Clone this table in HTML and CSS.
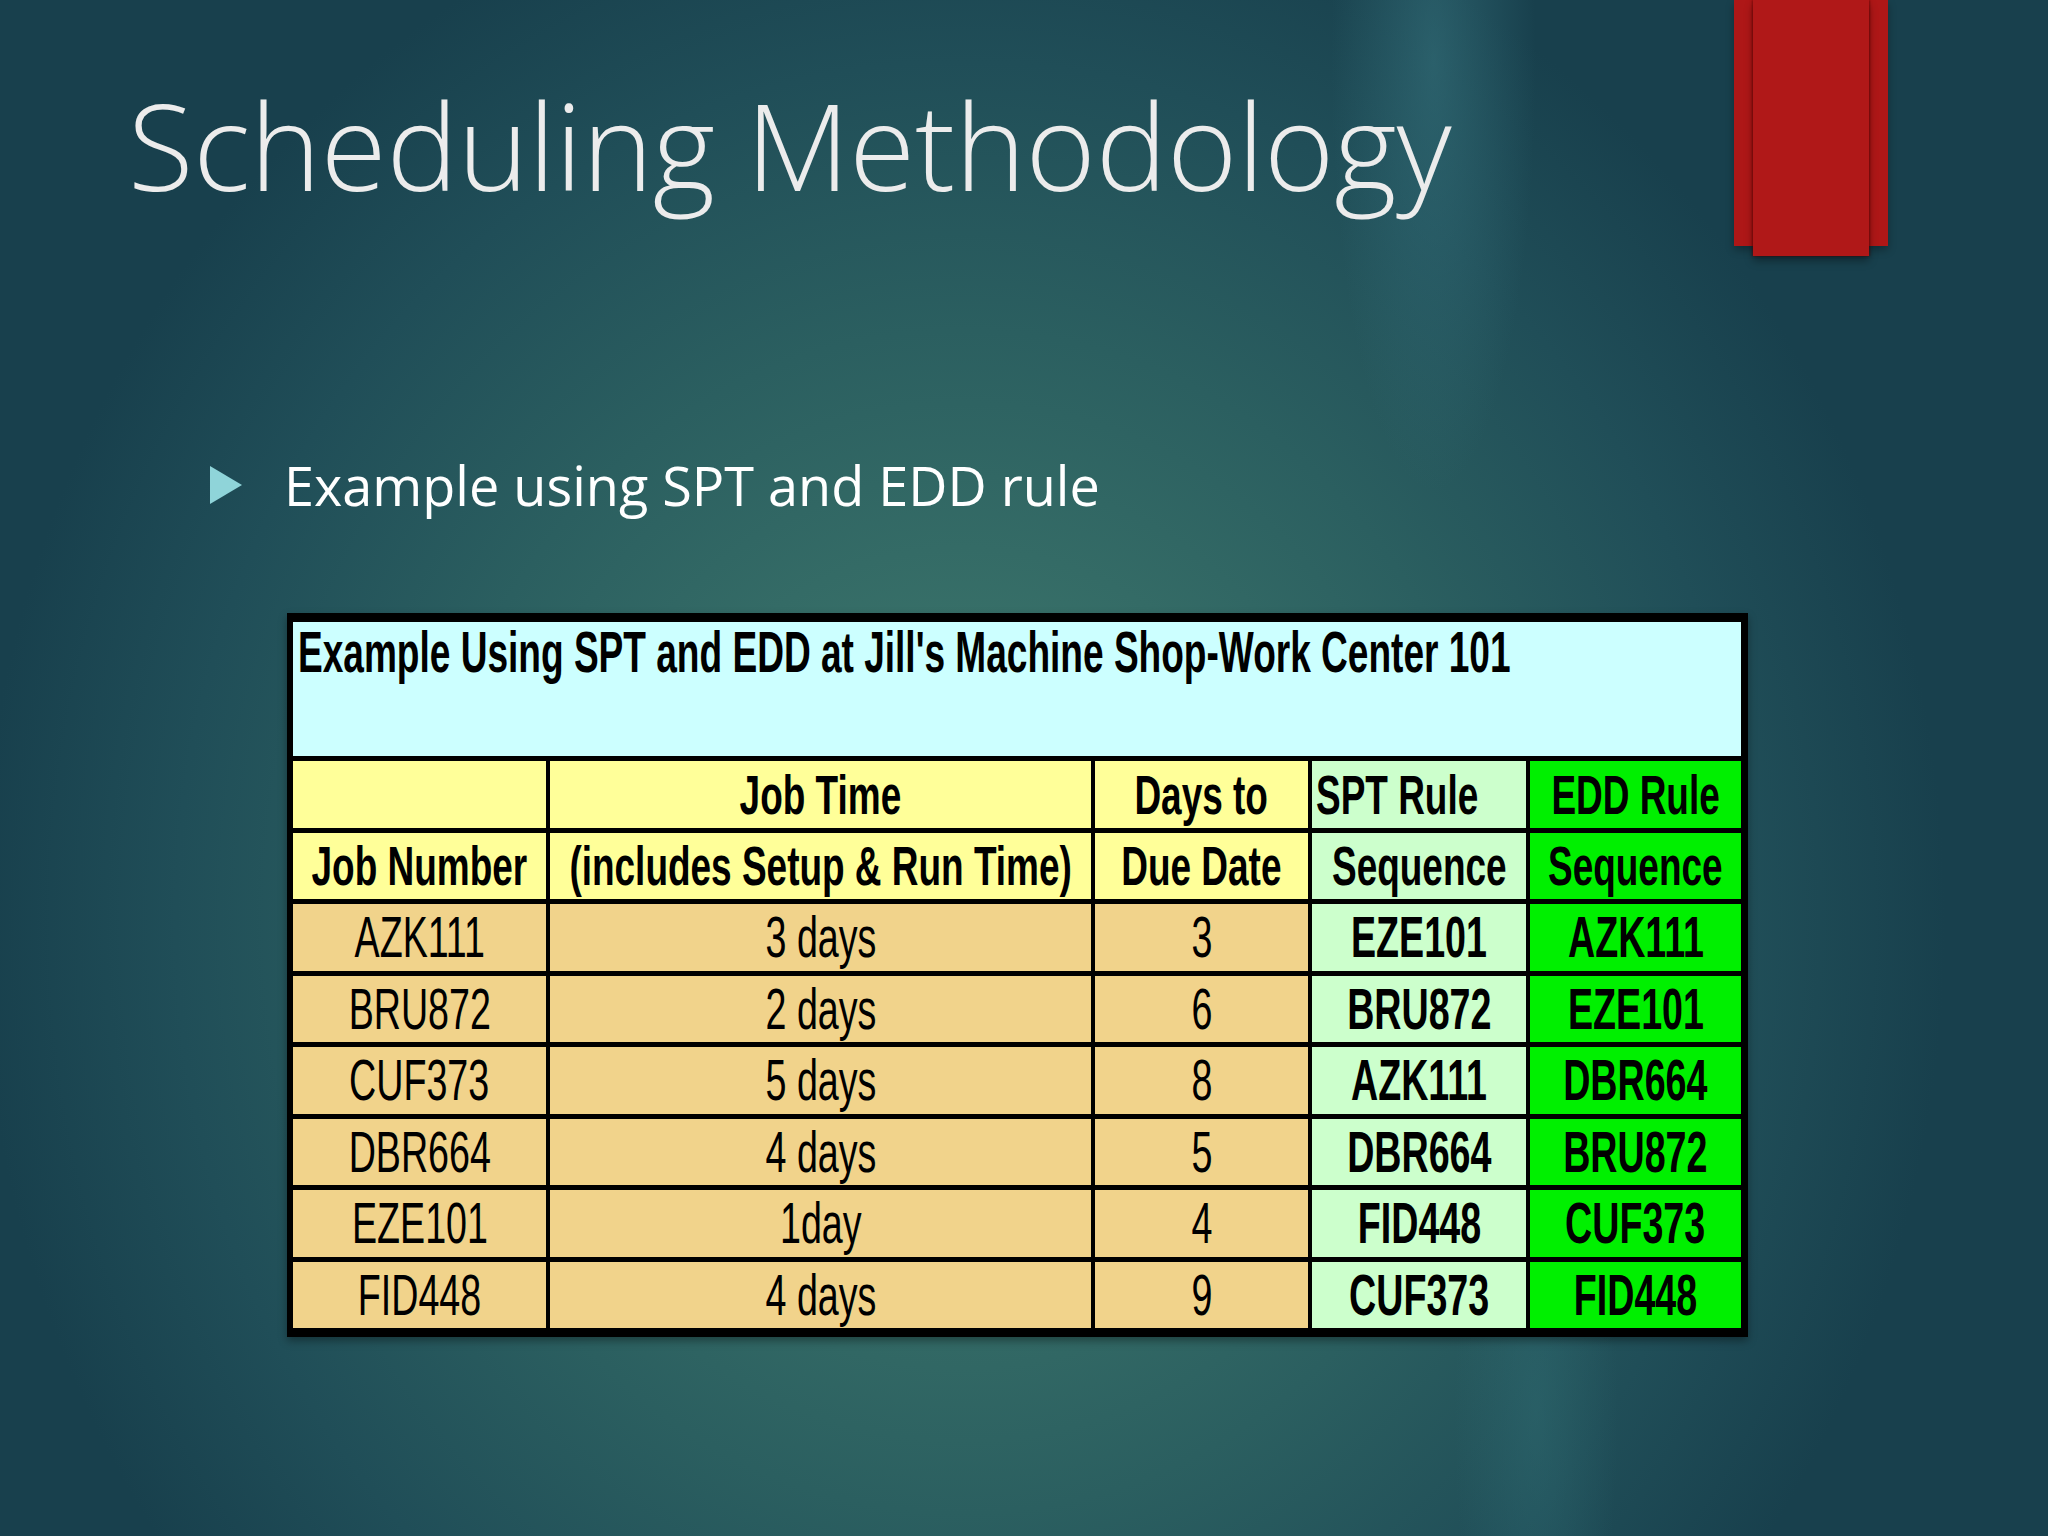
FILE: index.html
```html
<!DOCTYPE html>
<html lang="en">
<head>
<meta charset="utf-8">
<title>Scheduling Methodology</title>
<link rel="stylesheet" href="styles.css">
</head>
<body>
<div class="slide">
  <div class="ribbon"><div class="ribbon-inner"></div></div>
  <h1 class="title">Scheduling Methodology</h1>
  <ul class="bullets">
    <li><span class="arrow"></span>Example using SPT and EDD rule</li>
  </ul>
  <div class="sheet">
    <div class="cell caption"><span class="t left">Example Using SPT and EDD at Jill's Machine Shop-Work Center 101</span></div>

    <div class="cell hdr"></div>
    <div class="cell hdr"><span class="t b">Job Time</span></div>
    <div class="cell hdr"><span class="t b">Days to</span></div>
    <div class="cell hdr spt start"><span class="t b left">SPT Rule</span></div>
    <div class="cell hdr edd"><span class="t b">EDD Rule</span></div>

    <div class="cell hdr"><span class="t b">Job Number</span></div>
    <div class="cell hdr"><span class="t b">(includes Setup &amp; Run Time)</span></div>
    <div class="cell hdr"><span class="t b">Due Date</span></div>
    <div class="cell hdr spt"><span class="t b">Sequence</span></div>
    <div class="cell hdr edd"><span class="t b">Sequence</span></div>

    <div class="cell tan"><span class="t">AZK111</span></div>
    <div class="cell tan"><span class="t">3 days</span></div>
    <div class="cell tan"><span class="t">3</span></div>
    <div class="cell spt"><span class="t b">EZE101</span></div>
    <div class="cell edd"><span class="t b">AZK111</span></div>

    <div class="cell tan"><span class="t">BRU872</span></div>
    <div class="cell tan"><span class="t">2 days</span></div>
    <div class="cell tan"><span class="t">6</span></div>
    <div class="cell spt"><span class="t b">BRU872</span></div>
    <div class="cell edd"><span class="t b">EZE101</span></div>

    <div class="cell tan"><span class="t">CUF373</span></div>
    <div class="cell tan"><span class="t">5 days</span></div>
    <div class="cell tan"><span class="t">8</span></div>
    <div class="cell spt"><span class="t b">AZK111</span></div>
    <div class="cell edd"><span class="t b">DBR664</span></div>

    <div class="cell tan"><span class="t">DBR664</span></div>
    <div class="cell tan"><span class="t">4 days</span></div>
    <div class="cell tan"><span class="t">5</span></div>
    <div class="cell spt"><span class="t b">DBR664</span></div>
    <div class="cell edd"><span class="t b">BRU872</span></div>

    <div class="cell tan"><span class="t">EZE101</span></div>
    <div class="cell tan"><span class="t">1day</span></div>
    <div class="cell tan"><span class="t">4</span></div>
    <div class="cell spt"><span class="t b">FID448</span></div>
    <div class="cell edd"><span class="t b">CUF373</span></div>

    <div class="cell tan"><span class="t">FID448</span></div>
    <div class="cell tan"><span class="t">4 days</span></div>
    <div class="cell tan"><span class="t">9</span></div>
    <div class="cell spt"><span class="t b">CUF373</span></div>
    <div class="cell edd"><span class="t b">FID448</span></div>
  </div>
</div>
</body>
</html>
```

FILE: styles.css
```css
html, body {
  margin: 0;
  padding: 0;
}

body {
  width: 2048px;
  height: 1536px;
  overflow: hidden;
}

.slide {
  position: relative;
  width: 2048px;
  height: 1536px;
  box-sizing: border-box;
  padding-top: 85px;
  overflow: hidden;
  background:
    radial-gradient(ellipse 5% 28% at 70% 4%, rgba(56, 118, 128, 0.55), rgba(56, 118, 128, 0) 100%),
    radial-gradient(ellipse 4% 22% at 75% 92%, rgba(48, 110, 116, 0.45), rgba(48, 110, 116, 0) 100%),
    radial-gradient(ellipse 48% 70% at 47% 60%, #417c6f 0%, #376f68 28%, #2b5f60 55%, #204e58 80%, #18404d 100%);
  background-color: #183f4d;
}

.ribbon {
  position: absolute;
  left: 1734px;
  top: 0;
  width: 154px;
  height: 246px;
  background: #ae1717;
  box-shadow: 0 4px 8px rgba(0, 0, 0, 0.3);
}

.ribbon-inner {
  position: absolute;
  left: 19px;
  top: 0;
  width: 116px;
  height: 256px;
  background: #b01818;
  box-shadow: 0 5px 8px rgba(0, 0, 0, 0.35), -1px 0 2px rgba(90, 0, 0, 0.5), 1px 0 2px rgba(90, 0, 0, 0.5);
}

.title {
  margin: 0 0 0 128px;
  font-family: "Open Sans", "Noto Sans", sans-serif;
  font-weight: 300;
  font-size: 120px;
  line-height: 120px;
  color: #ececec;
  letter-spacing: -0.2px;
}

.bullets {
  list-style: none;
  margin: 248px 0 0 0;
  padding: 0;
}

.bullets li {
  display: flex;
  align-items: center;
  font-family: "Open Sans", "Noto Sans", sans-serif;
  font-weight: 400;
  font-size: 54px;
  line-height: 64px;
  color: #ffffff;
  padding-left: 210px;
}

.arrow {
  width: 0;
  height: 0;
  border-top: 19px solid transparent;
  border-bottom: 19px solid transparent;
  border-left: 32px solid #8fd4d9;
  margin-right: 42px;
}

.sheet {
  display: grid;
  grid-template-columns: 253px 541px 213px 214px 211px;
  grid-template-rows: 134px 67px 66px repeat(6, 66.5px);
  column-gap: 4px;
  row-gap: 5px;
  width: fit-content;
  margin: 96px 0 0 287px;
  padding: 9px 7px 9px 6px;
  background: #000;
  box-shadow: 0 4px 8px rgba(0, 0, 0, 0.35);
  font-family: "Liberation Sans", Arial, sans-serif;
  color: #000;
}

.cell {
  display: flex;
  align-items: center;
  justify-content: center;
  overflow: visible;
  white-space: nowrap;
  font-size: 57px;
  line-height: 60px;
}

.cell.caption {
  grid-column: 1 / span 5;
  background: #ccffff;
  align-items: flex-start;
  justify-content: flex-start;
  padding-left: 5px;
}

.hdr {
  background: #ffff99;
  font-size: 56px;
}

.tan {
  background: #f1d38b;
}

.spt {
  background: #ccffcc;
}

.edd {
  background: #00f000;
}

.cell.start {
  justify-content: flex-start;
  padding-left: 4px;
}

.t {
  display: inline-block;
  transform: scaleX(0.66);
  transform-origin: center center;
}

.t.left {
  transform-origin: left center;
}

.b {
  font-weight: 700;
}

.caption .t {
  font-weight: 700;
  transform: scaleX(0.65);
}
```
